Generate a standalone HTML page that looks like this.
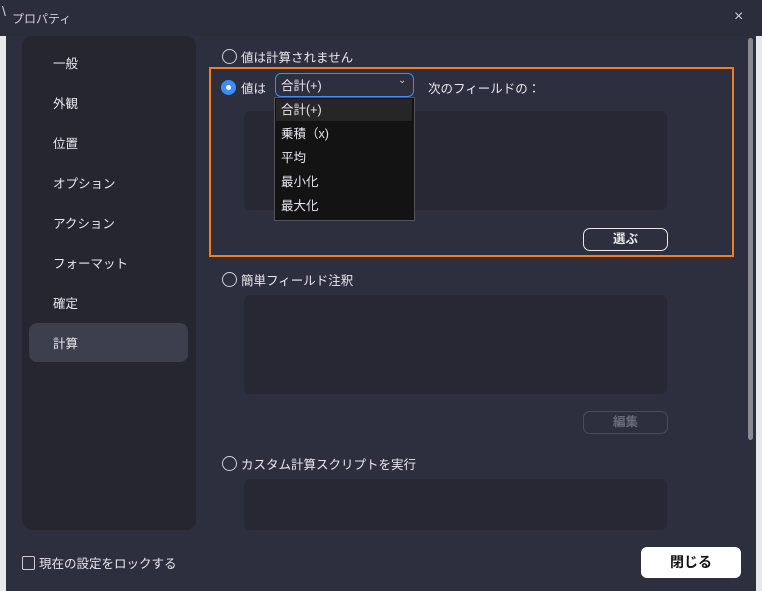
<!DOCTYPE html><html><head><meta charset="utf-8"><style>
body{margin:0;width:762px;height:591px;overflow:hidden;background:#2d2f3e;font-family:"Liberation Sans","Noto Sans CJK JP",sans-serif;color:#e8e8ee;font-size:12.5px;position:relative}
.a{position:absolute;white-space:nowrap}
.side{left:22px;top:36px;width:174px;height:494px;background:#25262f;border-radius:10px}
.it{position:absolute;left:53px;white-space:nowrap}
.sel{left:29px;top:323px;width:159px;height:39px;background:#3d3f4d;border-radius:8px}
.rad{width:13px;height:13px;border:1.3px solid #cfd0d6;border-radius:50%}
.ta{background:#272833;border-radius:6px}
.btn{border:1.3px solid #e8e8e8;border-radius:7px;text-align:center;font-weight:bold;box-sizing:border-box}
</style></head><body>
<div class="a" style="left:0;top:0;width:762px;height:36px;background:#2b2d3b"></div>
<div class="a" style="left:0;top:36px;width:6px;height:555px;background:#e8e8e8"></div>
<div class="a" style="left:756px;top:36px;width:6px;height:555px;background:#e8e8e8"></div>
<div class="a" style="left:6px;top:36px;width:750px;height:555px;background:#2d2f3e;border-radius:0 0 8px 8px"></div>
<div class="a" style="left:2px;top:3px;font-size:14px;color:#ccc">\</div>
<div class="a" style="left:12px;top:10px;font-size:12px;color:#d0d0d8">プロパティ</div>
<div class="a" style="left:734px;top:8px;font-size:16px;color:#ccc">×</div>
<div class="a side"></div>
<div class="a sel"></div>
<div class="it" style="top:53px">一般</div><div class="it" style="top:93px">外観</div><div class="it" style="top:133px">位置</div><div class="it" style="top:173px">オプション</div><div class="it" style="top:213px">アクション</div><div class="it" style="top:253px">フォーマット</div><div class="it" style="top:293px">確定</div><div class="it" style="top:333px">計算</div>
<div class="a rad" style="left:222px;top:49px"></div><div class="a" style="left:241px;top:47px">値は計算されません</div>
<div class="a" style="left:209px;top:67px;width:521px;height:186px;border:2px solid #f47c20"></div>
<div class="a" style="left:221px;top:80px;width:15px;height:15px;border-radius:50%;background:#3a8ef6"></div>
<div class="a" style="left:226px;top:85px;width:5px;height:5px;border-radius:50%;background:#fff"></div>
<div class="a" style="left:241px;top:78px">値は</div>
<div class="a" style="left:275px;top:73px;width:137px;height:22px;border:1.3px solid #3a8ef6;border-radius:6px"></div>
<div class="a" style="left:281px;top:75px">合計(+)</div>
<div class="a" style="left:398px;top:75px;font-size:10px;color:#ccc">⌄</div>
<div class="a" style="left:428px;top:78px">次のフィールドの：</div>
<div class="a ta" style="left:244px;top:111px;width:423px;height:99px"></div>
<div class="a" style="left:274px;top:97px;width:139px;height:122px;background:#131313;border:1.5px solid #555"></div>
<div class="a" style="left:276px;top:99px;width:136px;height:22px;background:#262626"></div>
<div class="a" style="left:281px;top:98px;line-height:24px">合計(+)<br>乗積（x)<br>平均<br>最小化<br>最大化</div>
<div class="a btn" style="left:583px;top:228px;width:85px;height:23px;line-height:21px">選ぶ</div>
<div class="a rad" style="left:222px;top:272px"></div><div class="a" style="left:241px;top:270px">簡単フィールド注釈</div>
<div class="a ta" style="left:244px;top:295px;width:423px;height:99px"></div>
<div class="a btn" style="left:583px;top:411px;width:85px;height:23px;line-height:21px;border-color:#4a4c5a;color:#6a6c78">編集</div>
<div class="a rad" style="left:222px;top:456px"></div><div class="a" style="left:241px;top:454px">カスタム計算スクリプトを実行</div>
<div class="a ta" style="left:244px;top:479px;width:423px;height:51px"></div>
<div class="a" style="left:748px;top:38px;width:5px;height:402px;background:#8a8a8e;border-radius:3px"></div>
<div class="a" style="left:22px;top:556px;width:11px;height:12px;border:1.3px solid #ccc;border-radius:2px"></div>
<div class="a" style="left:39px;top:553px">現在の設定をロックする</div>
<div class="a" style="left:641px;top:547px;width:100px;height:31px;background:#fff;border-radius:6px;color:#111;font-weight:bold;text-align:center;line-height:31px;font-size:14px">閉じる</div>
</body></html>
